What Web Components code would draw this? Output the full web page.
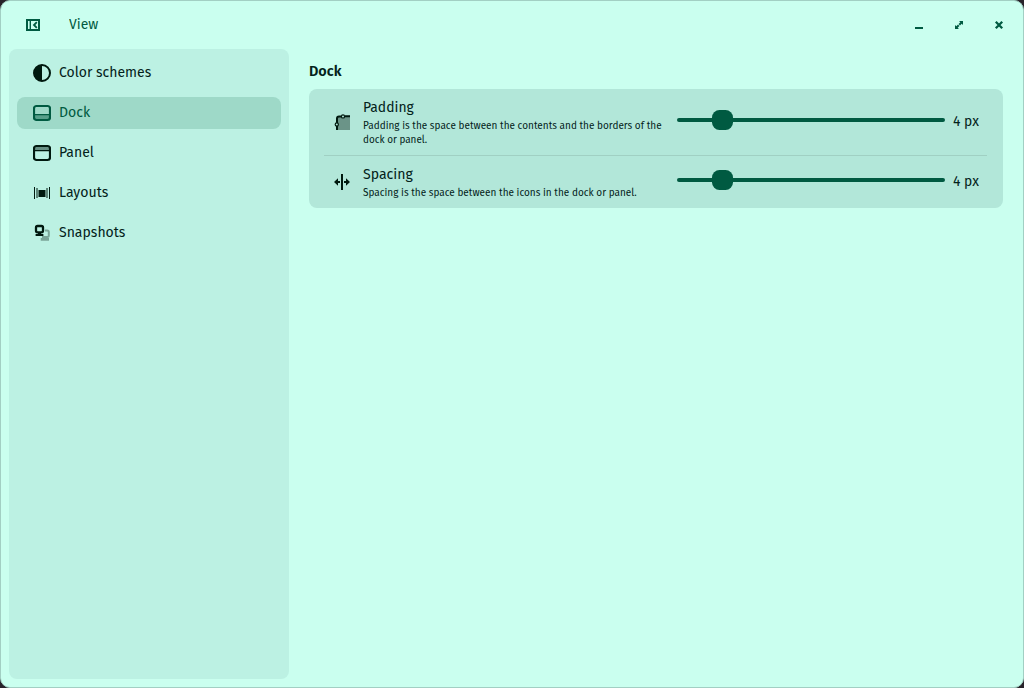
<!DOCTYPE html>
<html lang="en">
<head>
<meta charset="utf-8">
<title>View</title>
<style>
html,body{margin:0;height:100%;background:#27232a;overflow:hidden}
body{font-family:"Fira Sans","Noto Sans",sans-serif;font-size:14.4px;color:#03221a}
</style>
</head>
<body>
<app-window></app-window>
<script>
const icons = {
  sidebar: `<path fill-rule="evenodd" fill="#005a41" d="M1 2h14v12H1zM3 4v8h1.6V4zM6 4v8h7V4z"/><path d="M11.8 5.2 9 8l2.8 2.8" fill="none" stroke="#005a41" stroke-width="1.8"/>`,
  min: `<path fill="#005a41" d="M4 10h8v2H4z"/>`,
  max: `<g fill="#005a41"><path d="M8 4h4v4l-1.3-1.3L9 8.4 7.6 7l1.7-1.7zM4 8v4h4l-1.3-1.3L8.4 9 7 7.6 5.3 9.3z"/></g>`,
  close: `<path d="M4.8 4.8l6.4 6.4M11.2 4.8l-6.4 6.4" fill="none" stroke="#005a41" stroke-width="2.3"/>`,
  contrast: `<circle cx="9" cy="9" r="8" fill="none" stroke="#00190f" stroke-width="2"/><path fill="#00190f" d="M9 1a8 8 0 0 0 0 16z"/>`,
  dock: `<path fill="#005a41" opacity=".45" d="M2 11h14v4H2z"/><path fill="#005a41" d="M2 10h14v1.2H2z"/><rect x="1" y="2" width="16" height="14" rx="2.5" fill="none" stroke="#005a41" stroke-width="2.2"/>`,
  panel: `<path fill="#00190f" opacity=".45" d="M2 3h14v3H2z"/><path fill="#00190f" d="M2 6h14v1.2H2z"/><rect x="1" y="2" width="16" height="14" rx="2.5" fill="none" stroke="#00190f" stroke-width="2.2"/>`,
  layouts: `<g fill="#00190f"><path d="M1 3h1v12H1zM16 3h1v12h-1zM6 6h6v7H6z"/><path opacity=".5" d="M3 4h2v10H3zM13 4h2v10h-2zM5 6h1v7H5zM12 6h1v7h-1z"/></g>`,
  snapshots: `<g fill="none" stroke="#00190f"><path opacity=".35" stroke-width="2" d="M12 6.5h2.2q1.6 0 1.6 1.6v3.4q0 1.5-1.6 1.5H9"/><path opacity=".35" stroke-width="2.6" d="M7.7 15.4h8.3"/><rect x="3" y="2" width="7" height="6.3" rx="1.6" stroke-width="2.3"/><path stroke-width="2.2" d="M2.6 11h7.8"/><path stroke-width="3" d="M6.5 8.5v2"/></g>`,
  padding: `<path fill="#00190f" opacity=".4" d="M4 3h12v13H4z"/><g fill="none" stroke="#00190f"><path stroke-width="2" d="M3 16v-4M3 9V4.6Q3 2.5 5 2.5H7M11 2.3H16"/><circle cx="9" cy="2.4" r="1.6" stroke-width="1.2" fill="#b2e7d9"/><circle cx="2.8" cy="10.4" r="1.6" stroke-width="1.2" fill="#b2e7d9"/></g>`,
  spacing: `<path fill="#00190f" d="M7 0h2v16H7zM0 8l4-3.8V7h2v2H4v2.8zM16 8l-4-3.8V7h-2v2h2v2.8z"/>`
};

class UiIcon extends HTMLElement {
  connectedCallback() {
    const s = this.getAttribute('size') || 16;
    this.attachShadow({mode:'open'}).innerHTML = `<style>:host{display:block;flex:none;width:${s}px;height:${s}px}svg{display:block}</style><svg width="${s}" height="${s}" viewBox="0 0 ${s} ${s}">${icons[this.getAttribute('name')]}</svg>`;
  }
}
customElements.define('ui-icon', UiIcon);

/* One line of text condensed horizontally to a given width. */
class UiText extends HTMLElement {
  connectedCallback() {
    const w = +this.getAttribute('w');
    const root = this.attachShadow({mode:'open'});
    root.innerHTML = `<style>:host{display:block;width:${w}px;white-space:nowrap}span{display:inline-block;transform-origin:0 50%}</style><span><slot></slot></span>`;
    const span = root.querySelector('span');
    span.style.transform = `scaleX(${w / span.offsetWidth})`;
  }
}
customElements.define('ui-text', UiText);

class NavItem extends HTMLElement {
  connectedCallback() {
    this.attachShadow({mode:'open'}).innerHTML = `<style>
      :host{display:flex;align-items:center;box-sizing:border-box;height:32px;padding:0 16px;gap:8px;border-radius:8px;line-height:20px}
      :host([active]){background:#9ed9c8;color:#005a41}
      ui-text{margin-top:-1px}
    </style><ui-icon name="${this.getAttribute('icon')}" size="18"></ui-icon><ui-text w="${this.getAttribute('w')}">${this.getAttribute('label')}</ui-text>`;
  }
}
customElements.define('nav-item', NavItem);

class UiSlider extends HTMLElement {
  connectedCallback() {
    this.attachShadow({mode:'open'}).innerHTML = `<style>
      :host{display:flex;align-items:center;width:268px;height:20px}
      i{display:block;height:4px;background:#005a41}
      .a{width:35px;border-radius:2px 0 0 2px}.b{flex:1;border-radius:0 2px 2px 0}
      b{width:20.5px;height:20px;border-radius:7.5px;background:#005a41}
    </style><i class="a"></i><b></b><i class="b"></i>`;
  }
}
customElements.define('ui-slider', UiSlider);

class SettingRow extends HTMLElement {
  connectedCallback() {
    this.attachShadow({mode:'open'}).innerHTML = `<style>
      :host{display:flex;align-items:center;box-sizing:border-box;padding:0 24px 0 25px}
      .text{width:314px;margin-left:13px;display:flex;flex-direction:column}
      .title{line-height:20px}
      .desc{font-size:10.3px;line-height:14px;padding-top:1px;margin-bottom:-1px}
      ui-slider{margin-top:-4px}
      .value{margin-left:8px;margin-top:-1px;line-height:20px}
    </style><ui-icon name="${this.getAttribute('icon')}"></ui-icon>
    <div class="text"><ui-text class="title" w="${this.getAttribute('w')}">${this.getAttribute('label')}</ui-text><div class="desc"><slot></slot></div></div>
    <ui-slider></ui-slider><ui-text class="value" w="26">4 px</ui-text>`;
  }
}
customElements.define('setting-row', SettingRow);

class AppWindow extends HTMLElement {
  connectedCallback() {
    this.attachShadow({mode:'open'}).innerHTML = `<style>
      :host{display:flex;flex-direction:column;box-sizing:border-box;width:1024px;height:688px;border:1px solid #a2cfc3;border-radius:10px;background:#caffef;overflow:hidden}
      header{display:flex;align-items:center;height:48px;padding:0 16px 0 24px;color:#005a41;flex:none}
      header>ui-text{margin-left:28px;margin-top:-1px;line-height:20px}
      .buttons{display:flex;gap:24px;margin-left:auto}
      .body{display:flex;flex:1;padding:0 20px 8px 8px}
      nav{box-sizing:border-box;width:280px;padding:8px;display:flex;flex-direction:column;gap:8px;background:#bcf1e3;border-radius:8px}
      main{flex:1;margin-left:20px;padding-top:13px}
      h2{margin:0;font-size:14.4px;line-height:20px;font-weight:600}
      .card{margin-top:7px;height:119px;background:#b2e7d9;border-radius:8px}
      hr{border:0;height:1px;margin:0 16px 0 15px;background:#a0d0c3}
      setting-row{height:52px}.tall{height:66px}
    </style>
    <header><ui-icon name="sidebar"></ui-icon><ui-text w="29">View</ui-text>
      <div class="buttons"><ui-icon name="min"></ui-icon><ui-icon name="max"></ui-icon><ui-icon name="close"></ui-icon></div></header>
    <div class="body">
      <nav>
        <nav-item icon="contrast" label="Color schemes" w="92.3"></nav-item>
        <nav-item active icon="dock" label="Dock" w="31.3"></nav-item>
        <nav-item icon="panel" label="Panel" w="35"></nav-item>
        <nav-item icon="layouts" label="Layouts" w="49"></nav-item>
        <nav-item icon="snapshots" label="Snapshots" w="66.3"></nav-item>
      </nav>
      <main>
        <h2><ui-text w="32">Dock</ui-text></h2>
        <div class="card">
          <setting-row class="tall" icon="padding" label="Padding" w="51.2"><ui-text w="299">Padding is the space between the contents and the borders of the</ui-text><ui-text w="64.5">dock or panel.</ui-text></setting-row>
          <hr>
          <setting-row icon="spacing" label="Spacing" w="50"><ui-text w="274">Spacing is the space between the icons in the dock or panel.</ui-text></setting-row>
        </div>
      </main>
    </div>`;
  }
}
customElements.define('app-window', AppWindow);
</script>
</body>
</html>
